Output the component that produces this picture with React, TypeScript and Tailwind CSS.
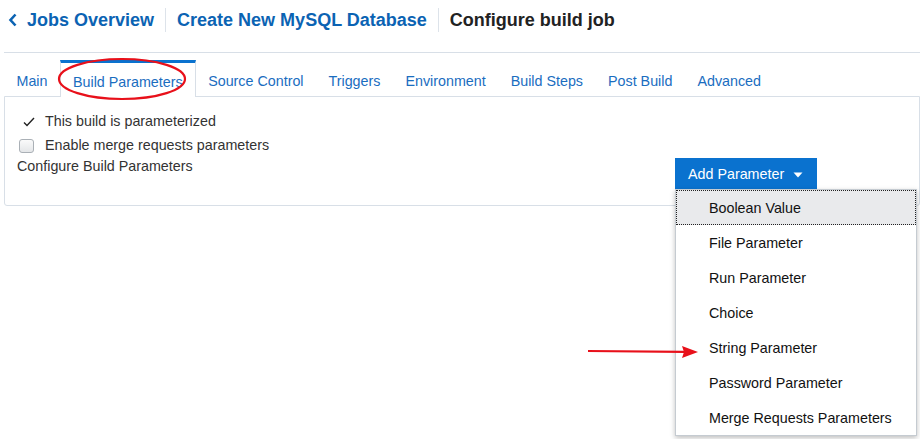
import { useState } from "react";

const tabs = [
  "Main",
  "Build Parameters",
  "Source Control",
  "Triggers",
  "Environment",
  "Build Steps",
  "Post Build",
  "Advanced",
];

const paramTypes = [
  "Boolean Value",
  "File Parameter",
  "Run Parameter",
  "Choice",
  "String Parameter",
  "Password Parameter",
  "Merge Requests Parameters",
];

const Separator = () => <div className="mx-[11px] h-[24px] w-px bg-[#dde3ea]" />;

export default function App() {
  const [active] = useState("Build Parameters");

  return (
    <div
      className="relative h-[439px] w-[920px] overflow-hidden bg-white text-[14.3px] text-[#333]"
      style={{ fontFamily: '"Liberation Sans", Arial, sans-serif' }}
    >
      {/* breadcrumb header */}
      <div className="flex h-[40px] items-center pl-[8px] text-[18px] font-bold">
        <svg width="10" height="14" viewBox="0 0 10 14" className="mr-[9px]">
          <path d="M7.5 1.5 L2.5 7 L7.5 12.5" fill="none" stroke="#0b63b3" strokeWidth="2.6" />
        </svg>
        <span className="text-[#0b63b3]">Jobs Overview</span>
        <Separator />
        <span className="text-[#0b63b3]">Create New MySQL Database</span>
        <Separator />
        <span className="text-[#222]">Configure build job</span>
      </div>

      <div className="ml-[4px] mt-[12px] border-t border-[#d8dfe7]">
        {/* tabs */}
        <div className="flex pt-[7px]">
          {tabs.map((t) =>
            t === active ? (
              <div
                key={t}
                className="-mb-px flex h-[37px] items-center border-x border-t-[3px] border-x-[#d8dfe7] border-t-[#0a72cf] bg-white px-[12px] pt-[5px] text-[#1a6dbf]"
              >
                {t}
              </div>
            ) : (
              <div key={t} className="flex h-[36px] items-center px-[12.5px] pt-[8px] text-[#1a6dbf]">
                {t}
              </div>
            )
          )}
        </div>

        {/* panel */}
        <div className="rounded-b-[3px] border border-[#d8dfe7] pb-[16px] pl-[12px] pr-[2px] pt-[15px]">
          <div className="flex h-[20px] items-center">
            <svg width="12" height="10" viewBox="0 0 12 10" className="ml-[6px] mr-[10px]">
              <path d="M1 5.5 L4 8.5 L11 1" fill="none" stroke="#222" strokeWidth="1.4" />
            </svg>
            <span>This build is parameterized</span>
          </div>
          <div className="mt-[4px] flex h-[20px] items-center">
            <span className="ml-[2px] mr-[11px] h-[14px] w-[15px] rounded-[3px] border border-[#aab0b6] bg-gradient-to-b from-[#fafafa] to-[#e4e6e8]" />
            <span>Enable merge requests parameters</span>
          </div>
          <div className="mt-[2px] flex items-start justify-between">
            <span className="leading-[16px]">Configure Build Parameters</span>
            <div className="relative w-[242px]">
              <button className="flex h-[31px] w-[142px] items-center bg-[#0a72cf] pl-[13px] pt-[2px] text-white">
                Add Parameter
                <svg width="10" height="6" viewBox="0 0 10 6" className="ml-[9px]">
                  <path d="M0.5 0.5 H9.5 L5 5.5 Z" fill="#fff" />
                </svg>
              </button>
              <div className="absolute left-0 top-full z-10 w-[242px] border border-[#c5cbd1] bg-white shadow-[0_2px_5px_rgba(0,0,0,0.25)]">
                {paramTypes.map((p, i) => (
                  <div
                    key={p}
                    className={`flex h-[35px] items-center pt-[2px] text-[#111] ${
                      i === 0 ? "border border-dotted border-[#222] bg-[#e9eaec] pl-[32px]" : "pl-[33px]"
                    }`}
                  >
                    {p}
                  </div>
                ))}
              </div>
            </div>
          </div>
        </div>
      </div>

      {/* annotation overlays */}
      <svg className="pointer-events-none absolute left-0 top-0 z-20" width="920" height="439">
        <ellipse cx="122" cy="79" rx="63" ry="20" fill="none" stroke="#e8101a" strokeWidth="2.2" />
        <line x1="588" y1="351" x2="684" y2="351.8" stroke="#e8101a" strokeWidth="2.2" />
        <path d="M698 352 L682 346 L684 352 L682 358 Z" fill="#e8101a" />
      </svg>
    </div>
  );
}
